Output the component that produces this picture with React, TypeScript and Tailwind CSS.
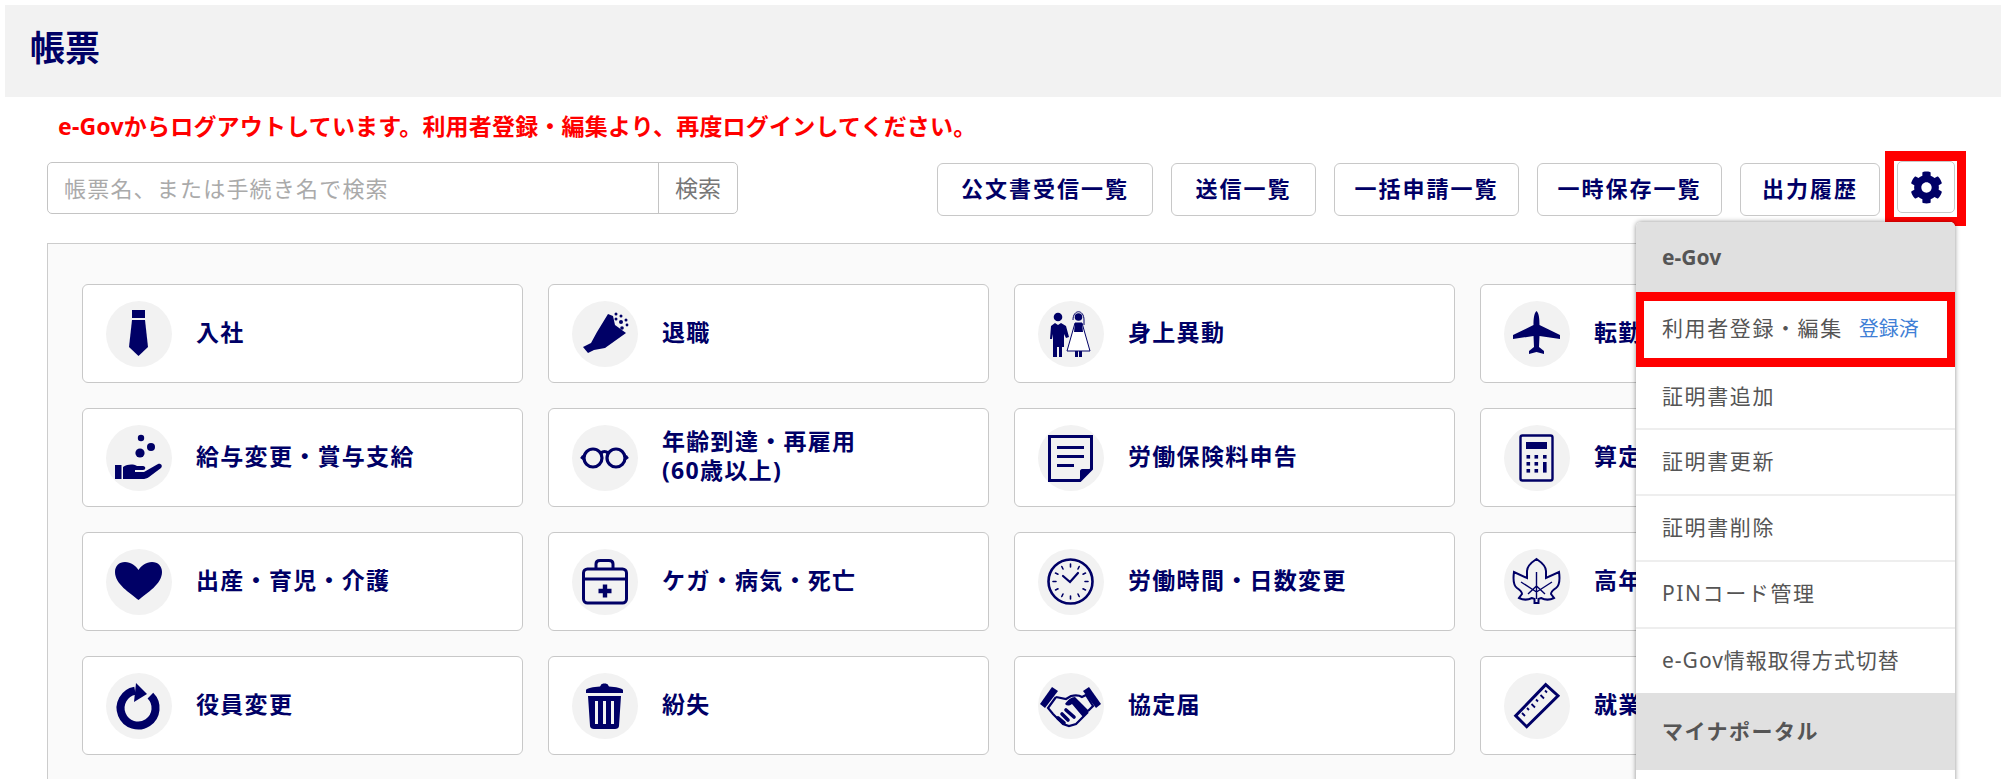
import React from "react";
import { FaCog } from "react-icons/fa";

const N = "#000066";

const icons: Record<string, React.ReactNode> = {
  tie: (<g fill={N}><rect x="26" y="9" width="13" height="8" /><path d="M26 19H39L42 46L32.5 55L23 46Z" /></g>),
  bouquet: (<g fill={N}><path d="M36 13L41 15L43 24L54 32L33 47L22 49L16 52L11 46L19 42L25 31Z" /><circle cx="44" cy="13" r="1.5" /><circle cx="49" cy="15" r="1.5" /><circle cx="54" cy="19" r="1.5" /><circle cx="44" cy="18" r="1.5" /><circle cx="49" cy="21" r="2" /><circle cx="55" cy="24" r="1.4" /><circle cx="50" cy="27" r="1.8" /></g>),
  couple: (<g fill={N}><circle cx="20" cy="16" r="4.3" /><path d="M13 25L17 22L20 24L23 22L28 25L31 36L28 37L26 33V46H24V56H21V46H19V56H15V33L14 38H12Z" /><circle cx="40.5" cy="16" r="3.8" /><path d="M35 19C35 8 46 8 46 19V24" fill="none" stroke={N} strokeWidth="1" /><path d="M37 22H44L48 36L52 50H29L33 36Z" fill="#fff" stroke={N} strokeWidth="1" /><path d="M37 22H44L45 31H36Z" /><path d="M37 50H40V56H37ZM41 50H44V56H41Z" /></g>),
  plane: (<g fill={N}><path d="M32.5 10C35 12 35.5 18 35.5 24L56 34V38L35.5 35L35 46L40 50V53L32.5 51L25 53V50L30 46L29.5 35L9 38V34L29.5 24C29.5 18 30 12 32.5 10Z" /></g>),
  hand: (<g fill={N}><circle cx="35" cy="13" r="3.2" /><circle cx="45" cy="22" r="4" /><circle cx="34" cy="28" r="4.6" /><rect x="9" y="40" width="6.5" height="14" /><path d="M17 42C22 39 27 39 31 41H37C40 41 40 45 37 45H29V47H38L52 39C55 38 57 41 55 43L43 52C41 53.5 39 54 36 54H17Z" /></g>),
  glasses: (<g fill="none" stroke={N} strokeWidth="3.2"><circle cx="21" cy="33" r="9" /><circle cx="44" cy="33" r="9" /><path d="M29 28C31 26 34 26 36 28" /><path d="M11.5 31L9.5 34M53.5 31L55.5 34" /></g>),
  doc: (<g><path d="M11.5 11.5H53.5V44L42 55.5H11.5Z" fill="none" stroke={N} strokeWidth="3" /><path d="M19 21H46V24H19ZM19 30H46V33H19ZM19 39H36V42H19Z" fill={N} /><path d="M42 56V46C42 45 43 44 44 44H54Z" fill={N} /></g>),
  calc: (<g><rect x="16.5" y="10.5" width="32" height="45" rx="2" fill="none" stroke={N} strokeWidth="2.4" /><g fill={N}><rect x="22" y="17" width="21" height="7" /><rect x="22.5" y="30" width="3.6" height="3.6" /><rect x="30.5" y="30" width="3.6" height="3.6" /><rect x="39" y="30" width="3.6" height="3.6" /><rect x="22.5" y="37" width="3.6" height="3.6" /><rect x="30.5" y="37" width="3.6" height="3.6" /><rect x="22.5" y="44" width="3.6" height="3.6" /><rect x="30.5" y="44" width="3.6" height="3.6" /><rect x="39" y="37" width="3.6" height="10.6" /></g></g>),
  heart: (<path d="M32.5 51C24 44 9 35 9 23C9 17 13 13 19 13C25 13 30 17 32.5 21C35 17 40 13 46 13C52 13 56 17 56 23C56 35 41 44 32.5 51Z" fill={N} />),
  aid: (<g fill="none" stroke={N} strokeWidth="3"><rect x="11.5" y="20" width="43" height="34" rx="4" /><path d="M24 20V15C24 12 26 11.5 28 11.5H37C39 11.5 41 12 41 15V20" /><path d="M11.5 30H54.5" /><path d="M33 35.5V48.5M26.5 42H39.5" strokeWidth="4.4" /></g>),
  clock: (<g><ellipse cx="32.5" cy="32.5" rx="22" ry="22" fill="none" stroke={N} strokeWidth="2.6" /><g stroke={N} strokeWidth="1.6" strokeLinecap="round" fill="none"><path d="M32.5 15V18M32.5 47V50M15 32.5H18M47 32.5H50M23.8 17.5L25 20M41.2 17.5L40 20M23.8 47.5L25 45M41.2 47.5L40 45M17.5 24L20 25.2M47.5 24L45 25.2M17.5 41L20 39.8M47.5 41L45 39.8" /><path d="M25 27L32 33L40 24" strokeWidth="2.2" /></g></g>),
  maple: (<g fill="none" stroke={N} strokeWidth="2"><path d="M32.5 10C37 13 42 18 42 22L42 29L55 23C56 30 56 36 52 39C49 41 47 43 47 45L50 49C46 51 41 51 37 49L34.5 50V54H30.5V50L28 49C24 51 19 51 15 49L18 45C18 43 16 41 13 39C9 36 9 30 10 23L23 29L23 22C23 18 28 13 32.5 10Z" /><path d="M32.5 23V50M17 33L32.5 43L48 33M24 45L32.5 37L41 45" strokeWidth="1.4" /></g>),
  refresh: (<g><path d="M44.4 22.6A17.5 17.5 0 1 1 29 17.8" fill="none" stroke={N} strokeWidth="8" /><path d="M30 10L41 21L28 29Z" fill={N} /></g>),
  trash: (<g fill={N}><path d="M29 12C29 10 36 10 36 12L37 13.5C44 14 50 15 51 17V20H14V17C15 15 21 14 28 13.5Z" /><path d="M16 23H49L47 53C47 55 45 56 43 56H22C20 56 18 55 18 53ZM23 28V51H26V28ZM31 28V51H34V28ZM39 28V51H42V28Z" fillRule="evenodd" /></g>),
  shake: (<g fill={N}><path d="M2 31L14 14L20 18L7 35Z" /><path d="M63 31L51 14L45 18L58 35Z" /><path d="M18 24L28 26L33 23C37 22 41 22 44 24L48 22L55 33L50 38" fill="none" stroke={N} strokeWidth="2.2" /><path d="M18 24L10 35L15 41L25 51L31 53L38 51L50 39" fill="none" stroke={N} strokeWidth="2.2" /><path d="M24 41L30 47M28 37L36 44M20 45L26 50" stroke={N} strokeWidth="3.6" strokeLinecap="round" /><path d="M27 31C30 27 33 24 37 24L51 38L45 44L34 31C31 33 29 33 27 31Z" /></g>),
  ruler: (<g fill="none" stroke={N} strokeWidth="3"><path d="M41.7 11.7L54 22.7L22.7 53.7L11.7 42.7Z" /><path d="M18 40L21 43M23 35L25 37M27.5 31L31 34.5M32 26.5L34 28.5M36.5 22L40 25.5M41 17.5L43 19.5" strokeWidth="1.8" /></g>),
};

const cards: { icon: string; label: React.ReactNode }[] = [
  { icon: "tie", label: "入社" },
  { icon: "bouquet", label: "退職" },
  { icon: "couple", label: "身上異動" },
  { icon: "plane", label: "転勤" },
  { icon: "hand", label: "給与変更・賞与支給" },
  { icon: "glasses", label: (<>年齢到達・再雇用<br />(60歳以上)</>) },
  { icon: "doc", label: "労働保険料申告" },
  { icon: "calc", label: "算定" },
  { icon: "heart", label: "出産・育児・介護" },
  { icon: "aid", label: "ケガ・病気・死亡" },
  { icon: "clock", label: "労働時間・日数変更" },
  { icon: "maple", label: "高年" },
  { icon: "refresh", label: "役員変更" },
  { icon: "trash", label: "紛失" },
  { icon: "shake", label: "協定届" },
  { icon: "ruler", label: "就業" },
];

const buttons = [
  { label: "公文書受信一覧", w: "w-[216px]" },
  { label: "送信一覧", w: "w-[145px]" },
  { label: "一括申請一覧", w: "w-[185px]" },
  { label: "一時保存一覧", w: "w-[185px]" },
  { label: "出力履歴", w: "w-[140px]" },
];

const items = [
  { label: "証明書更新", h: "h-[66px]" },
  { label: "証明書削除", h: "h-[66px]" },
  { label: "PINコード管理", h: "h-[67px]" },
];

export default function App() {
  return (
    <div className="h-[779px] w-[2001px] overflow-hidden bg-white pt-[5px] text-[#000066] [font-family:'Noto_Sans','Noto_Sans_CJK_JP',sans-serif]">
      <header className="ml-[5px] flex h-[92px] items-center pb-[7px] pl-[25px] bg-[#f2f2f2]">
        <h1 className="text-[35px] font-bold leading-none">帳票</h1>
      </header>

      <p className="ml-[58px] mt-[14px] text-[23px] font-bold leading-[30px] tracking-[0.2px] text-[#ff0000]">
        e-Govからログアウトしています。利用者登録・編集より、再度ログインしてください。
      </p>

      <div className="ml-[47px] mr-[35px] mt-[10px] flex items-start justify-between">
        <div className="mt-[11px] flex h-[52px] w-[691px] overflow-hidden rounded-[5px] border border-[#c4c4c4] text-[22px] leading-none">
          <div className="flex flex-1 items-center pl-[16px] tracking-[1.2px] text-[#aaaaaa]">帳票名、または手続き名で検索</div>
          <div className="flex w-[79px] items-center justify-center border-l border-[#c4c4c4] text-[23px] text-[#777777]">検索</div>
        </div>

        <div className="flex items-start">
          <nav className="mt-[12px] flex gap-[18px]">
            {buttons.map((b) => (
              <div key={b.label} className={`flex h-[53px] items-center justify-center rounded-[6px] border border-[#c8c8c8] pb-[2px] text-[22px] font-bold tracking-[2px] ${b.w}`}>
                {b.label}
              </div>
            ))}
          </nav>

          <div className="relative ml-[5px]">
            <div className="h-[75px] w-[81px] border-x-[9px] border-b-[9px] border-t-[10px] border-[#ff0000] pl-[3px]">
              <div className="flex h-[52px] w-[58px] items-center justify-center rounded-[5px] border border-[#c8c8c8] bg-white">
                <FaCog size={33} color={N} />
              </div>
            </div>

            <div className="absolute right-[11px] top-[71px] w-[319px] rounded-t-[5px] bg-white text-[21px] leading-none text-[#555555] shadow-[0_0_5px_rgba(0,0,0,0.45)]">
              <div className="flex h-[70px] items-center rounded-t-[5px] bg-[#e0e0e0] pl-[26px] font-bold">e-Gov</div>
              <div className="flex h-[75px] items-center border-x-[8px] border-y-[9px] border-[#ff0000] pb-[2px] pl-[18px]">
                <span className="tracking-[1.6px]">利用者登録・編集</span>
                <span className="ml-[16px] text-[20px] text-[#3f7fd6]">登録済</span>
              </div>
              <div className="flex h-[63px] items-center border-b-2 border-[#eeeeee] pb-[2px] pl-[26px] tracking-[1.6px]">証明書追加</div>
              {items.map((it) => (
                <div key={it.label} className={`flex items-center border-b-2 border-[#eeeeee] pb-[2px] pl-[26px] tracking-[1.6px] ${it.h}`}>
                  {it.label}
                </div>
              ))}
              <div className="flex h-[64px] items-center pb-[2px] pl-[26px] tracking-[1px]">e-Gov情報取得方式切替</div>
              <div className="flex h-[77px] items-center bg-[#e0e0e0] pl-[26px] font-bold tracking-[1.5px]">マイナポータル</div>
              <div className="h-[80px]" />
            </div>
          </div>
        </div>
      </div>

      <main className="ml-[47px] mt-[17px] w-[1908px] border border-[#cccccc] bg-[#fafafa] pb-[40px] pl-[34px] pr-[33px] pt-[40px]">
        <div className="grid grid-cols-4 gap-x-[25px] gap-y-[25px]">
          {cards.map((c, i) => (
            <div key={i} className="flex h-[99px] items-center rounded-[6px] border border-[#c8c8c8] bg-white pl-[23px]">
              <svg viewBox="0 0 66 66" className="h-[66px] w-[66px] shrink-0" aria-hidden>
                <circle cx="33" cy="33" r="33" fill="#f2f2f2" />
                {icons[c.icon]}
              </svg>
              <div className="ml-[24px] pb-[3px] text-[23px] font-bold leading-[29px] tracking-[1.3px]">{c.label}</div>
            </div>
          ))}
        </div>
      </main>
    </div>
  );
}
